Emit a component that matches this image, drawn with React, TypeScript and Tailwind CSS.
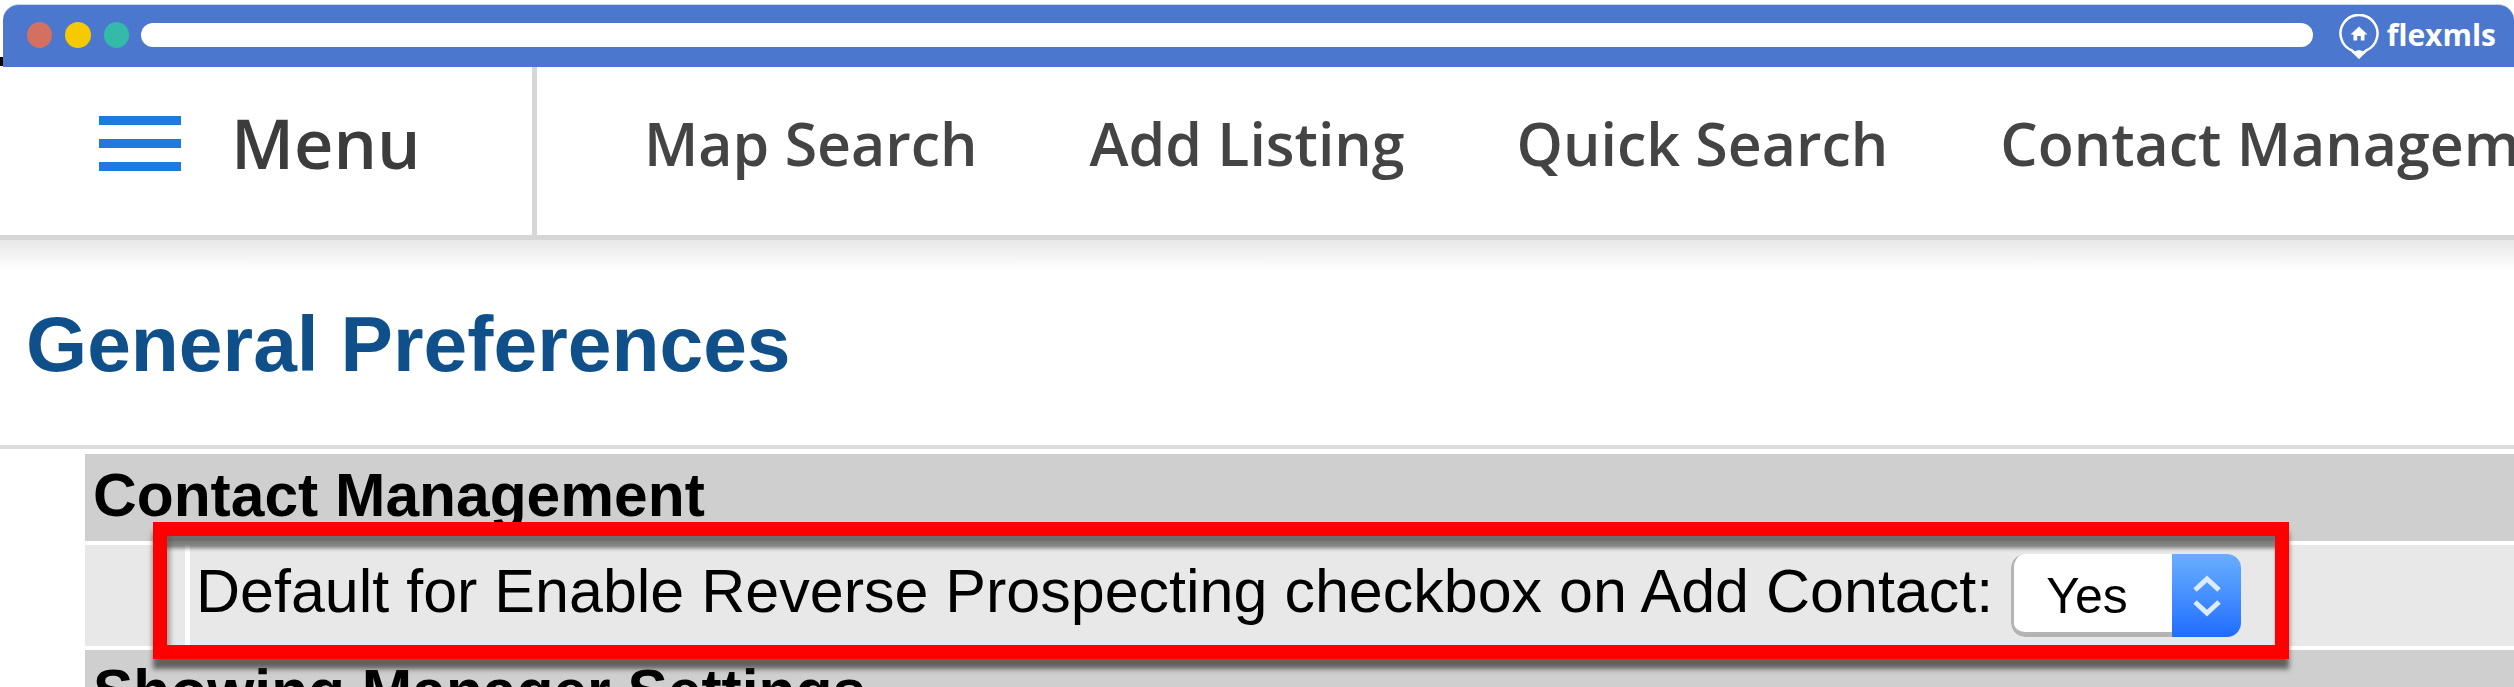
import React from 'react';

const navItems = ['Map Search', 'Add Listing', 'Quick Search', 'Contact Management'];

const App: React.FC = () => {
  return (
    <div className="relative h-[687px] w-full overflow-hidden bg-white font-['Liberation_Sans',Arial,sans-serif]">
      <span className="absolute left-0 top-[57px] h-[9px] w-[3px] bg-black" />

      {/* Browser chrome */}
      <div className="ml-[3px] mt-[4px] flex h-[63px] items-center rounded-t-[16px] border-t border-[#c9d6ec] bg-[#4b77cf] pb-[3px] pl-[24px] pr-[18px]">
        <div className="flex items-center gap-[13px]">
          <span className="h-[26px] w-[25px] rounded-full bg-[#d4705f]" />
          <span className="h-[26px] w-[26px] rounded-full bg-[#f5cb00]" />
          <span className="h-[26px] w-[25px] rounded-full bg-[#33baa8]" />
        </div>
        <div className="ml-[12px] h-[24px] flex-1 rounded-full bg-white" />
        <div className="ml-[26px] flex items-center gap-[8px]">
          <svg width="40" height="46" viewBox="0 0 40 46" className="mt-[5px]">
            <path d="M13 36.5 A18.5 18.5 0 1 1 27 36.5 L20 43 Z" fill="none" stroke="#fff" strokeWidth="2.5" />
            <path d="M13 38 L20 45 L27 38 L20 36 Z" fill="#fff" />
            <path d="M20 12.5 L28.5 20.5 H25.5 V26.5 H21.8 V22 H18.2 V26.5 H14.5 V20.5 H11.5 Z" fill="#fff" />
          </svg>
          <span className="font-['Open_Sans',sans-serif] text-[30px] font-bold leading-none text-white">flexmls</span>
        </div>
      </div>

      {/* Main nav */}
      <div className="flex h-[173px] items-stretch overflow-hidden whitespace-nowrap border-b-[5px] border-[#d6d6d6] font-['Open_Sans',sans-serif] text-[#444]">
        <div className="flex w-[537px] shrink-0 items-center border-r-[5px] border-[#d6d6d6] pb-[16px] pl-[99px]">
          <div className="flex w-[82px] flex-col gap-[14px]">
            <span className="h-[9px] bg-[#1f7ade]" />
            <span className="h-[9px] bg-[#1f7ade]" />
            <span className="h-[9px] bg-[#1f7ade]" />
          </div>
          <span className="ml-[50px] text-[68.5px] font-semibold leading-none text-[#3c3c3c]">Menu</span>
        </div>
        <div className="ml-[107px] flex items-center gap-[112px] pb-[16px] text-[59px] font-semibold leading-none">
          {navItems.map((item) => (
            <span key={item}>{item}</span>
          ))}
        </div>
      </div>
      <div className="h-[30px] bg-gradient-to-b from-[#e8e8e8] to-white" />

      {/* Page heading */}
      <h1 className="ml-[26px] mt-[35px] text-[78.6px] font-bold leading-[79px] text-[#10508a]">General Preferences</h1>
      <div className="mt-[61px] h-[4px] bg-[#dcdcdc]" />

      {/* Preferences table */}
      <div className="ml-[85px] mt-[5px] whitespace-nowrap text-black">
        <div className="h-[87px] bg-[#cfcfcf] pl-[8px] pt-[11px] text-[60.5px] font-bold leading-none">Contact Management</div>
        <div className="flex h-[109px] items-center border-y-4 border-white bg-[#e8e8e8] pl-[100px]">
          <span className="h-full w-[5px] bg-white" />
          <span className="mb-[8px] ml-[6px] text-[61px] leading-none">Default for Enable Reverse Prospecting checkbox on Add Contact:</span>
          <div className="ml-[18px] flex h-[83px] w-[230px] overflow-hidden rounded-[14px] bg-white">
            <span className="flex flex-1 items-center rounded-l-[14px] border-b-[5px] border-l-[3px] border-[#b4b4b4] pl-[32px] pt-[6px] text-[50px] leading-none">Yes</span>
            <span className="flex w-[69px] items-center justify-center bg-gradient-to-b from-[#6aaeff] to-[#1f6cff]">
              <svg width="32" height="42" viewBox="0 0 32 42" fill="none" stroke="#dcecff" strokeWidth="5">
                <path d="M4 15 L16 4 L28 15" />
                <path d="M4 27 L16 38 L28 27" />
              </svg>
            </span>
          </div>
        </div>
        <div className="h-[60px] bg-[#cfcfcf] pl-[8px] pt-[11px] text-[60.5px] font-bold leading-none">Showing Manager Settings</div>
      </div>

      {/* Red callout drawn over the table */}
      <div className="pointer-events-none absolute left-[153px] top-[522px] h-[137px] w-[2136px] border-[14px] border-[#ff0000] shadow-[0_10px_5px_0_rgba(50,50,50,0.7),inset_0_14px_4px_-2px_rgba(70,70,70,0.7),inset_14px_0_4px_-10px_rgba(90,90,90,0.4)]" />
    </div>
  );
};

export default App;
